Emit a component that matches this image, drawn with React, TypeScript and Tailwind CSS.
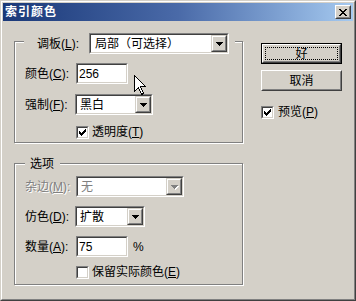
import React from "react";

const FONT = "font-['Liberation_Sans','Noto_Sans_CJK_SC',sans-serif]";

function Arrow({ disabled }: { disabled?: boolean }) {
  return (
    <svg width="8" height="5" viewBox="0 0 8 5" shapeRendering="crispEdges">
      {disabled && (
        <path d="M1 1h7v1h-7z M2 2h5v1h-5z M3 3h3v1h-3z M4 4h1v1h-1z" fill="#ffffff" />
      )}
      <path
        d="M0 0h7v1h-7z M1 1h5v1h-5z M2 2h3v1h-3z M3 3h1v1h-1z"
        fill={disabled ? "#808080" : "#000000"}
      />
    </svg>
  );
}

function Sunken({ className, children }: { className?: string; children?: React.ReactNode }) {
  return (
    <div
      className={`border border-t-[#808080] border-l-[#808080] border-b-white border-r-white ${className ?? ""}`}
    >
      <div className="h-full w-full border border-t-[#404040] border-l-[#404040] border-b-[#d4d0c8] border-r-[#d4d0c8] bg-white flex items-center">
        {children}
      </div>
    </div>
  );
}

function Combo({
  w,
  text,
  disabled,
  pl = "pl-[3px]",
}: {
  w: string;
  text: string;
  disabled?: boolean;
  pl?: string;
}) {
  return (
    <Sunken className={`${w} h-[21px]`}>
      <div
        className={`flex-1 ${pl} text-[12px] leading-[14px] ${disabled ? "text-[#808080]" : "text-black"} whitespace-nowrap`}
      >
        {text}
      </div>
      <div className="w-[16px] h-[17px] border border-t-[#d4d0c8] border-l-[#d4d0c8] border-b-[#404040] border-r-[#404040]">
        <div className="w-full h-full border border-t-white border-l-white border-b-[#808080] border-r-[#808080] bg-[#d4d0c8] flex items-center justify-center pl-px pt-px">
          <Arrow disabled={disabled} />
        </div>
      </div>
    </Sunken>
  );
}

function Input({ value }: { value: string }) {
  return (
    <Sunken className="w-[52px] h-[21px]">
      <div className="pl-[1px] text-[12px] leading-[14px] text-black">{value}</div>
    </Sunken>
  );
}

function CheckBox({ checked }: { checked?: boolean }) {
  return (
    <Sunken className="w-[13px] h-[13px] shrink-0">
      <div className="w-full h-full flex items-center justify-center">
        {checked && (
          <svg width="7" height="7" viewBox="0 0 7 7" shapeRendering="crispEdges">
            <path
              d="M6 0h1v1h-1z M5 1h2v1h-2z M0 2h1v1h-1z M4 2h3v1h-3z M0 3h2v1h-2z M3 3h3v1h-3z M0 4h5v1h-5z M1 5h3v1h-3z M2 6h1v1h-1z"
              fill="#000"
            />
          </svg>
        )}
      </div>
    </Sunken>
  );
}

function Label({ w, children, disabled }: { w: string; children: React.ReactNode; disabled?: boolean }) {
  return (
    <div
      className={`${w} shrink-0 text-[12px] leading-[14px] whitespace-nowrap ${
        disabled ? "text-[#808080] [text-shadow:1px_1px_0_#ffffff]" : "text-black"
      }`}
    >
      {children}
    </div>
  );
}

const groupCls =
  "border border-[#808080] shadow-[inset_1px_1px_0_#ffffff,1px_1px_0_#ffffff] flex flex-col";

export default function App() {
  return (
    <div className={`relative w-[356px] h-[301px] ${FONT} select-none`}>
      <div className="w-full h-full border border-t-[#d4d0c8] border-l-[#d4d0c8] border-b-[#404040] border-r-[#404040]">
        <div className="w-full h-full border border-t-white border-l-white border-b-[#808080] border-r-[#808080] bg-[#d4d0c8] p-px flex flex-col">
          {/* Title bar */}
          <div className="h-[18px] shrink-0 bg-gradient-to-r from-[#1a3878] via-[#4a6aa8] to-[#a6caf0] flex items-center justify-between pl-[2px] pr-[2px]">
            <div className="text-white font-bold text-[12px] leading-[14px] tracking-[1px]">索引颜色</div>
            <div className="w-[16px] h-[14px] border border-t-white border-l-white border-b-[#404040] border-r-[#404040]">
              <div className="w-full h-full border border-t-[#d4d0c8] border-l-[#d4d0c8] border-b-[#808080] border-r-[#808080] bg-[#d4d0c8] flex items-center justify-center pt-px">
                <svg width="8" height="7" viewBox="0 0 8 7" shapeRendering="crispEdges">
                  <path
                    d="M0 0h2v1h-2z M6 0h2v1h-2z M1 1h2v1h-2z M5 1h2v1h-2z M2 2h4v1h-4z M3 3h2v1h-2z M2 4h4v1h-4z M1 5h2v1h-2z M5 5h2v1h-2z M0 6h2v1h-2z M6 6h2v1h-2z"
                    fill="#000"
                  />
                </svg>
              </div>
            </div>
          </div>

          {/* Body */}
          <div className="flex flex-row pl-[11px]">
            {/* Left column */}
            <div className="flex flex-col w-[229px]">
              {/* Group 1 */}
              <div className={`${groupCls} mt-[20px] h-[102px]`}>
                <div className="-mt-[9px] ml-[9px] pl-[13px] pr-[6px] bg-[#d4d0c8] flex items-center w-fit h-[21px]">
                  <Label w="w-[52px]">
                    调板(<u>L</u>):
                  </Label>
                  <Combo w="w-[140px]" text="局部（可选择）" pl="pl-[4px]" />
                </div>
                <div className="mt-[9px] pl-[10px] flex items-center">
                  <Label w="w-[51px]">
                    颜色(<u>C</u>):
                  </Label>
                  <Input value="256" />
                </div>
                <div className="mt-[10px] pl-[10px] flex items-center">
                  <Label w="w-[50px]">
                    强制(<u>F</u>):
                  </Label>
                  <Combo w="w-[78px]" text="黑白" />
                </div>
                <div className="mt-[10px] pl-[61px] flex items-center gap-[3px]">
                  <CheckBox checked />
                  <div className="text-[12px] leading-[14px] text-black">
                    透明度(<u>T</u>)
                  </div>
                </div>
              </div>

              {/* Group 2 */}
              <div className={`${groupCls} mt-[20px] h-[122px]`}>
                <div className="-mt-[7px] ml-[10px] pl-[5px] w-[35px] bg-[#d4d0c8] text-[12px] leading-[14px] text-black">
                  选项
                </div>
                <div className="mt-[5px] pl-[10px] flex items-center">
                  <Label w="w-[51px]" disabled>
                    杂边(<u>M</u>):
                  </Label>
                  <Combo w="w-[108px]" text="无" disabled />
                </div>
                <div className="mt-[9px] pl-[10px] flex items-center">
                  <Label w="w-[50px]">
                    仿色(<u>D</u>):
                  </Label>
                  <Combo w="w-[70px]" text="扩散" />
                </div>
                <div className="mt-[9px] pl-[10px] flex items-center">
                  <Label w="w-[51px]">
                    数量(<u>A</u>):
                  </Label>
                  <Input value="75" />
                  <div className="ml-[5px] text-[12px] leading-[14px] text-black">%</div>
                </div>
                <div className="mt-[8px] pl-[61px] flex items-center gap-[3px]">
                  <CheckBox />
                  <div className="text-[12px] leading-[14px] text-black">
                    保留实际颜色(<u>E</u>)
                  </div>
                </div>
              </div>
            </div>

            {/* Right column */}
            <div className="flex flex-col ml-[18px]">
              <div className="mt-[22px] w-[81px] h-[21px] border border-black">
                <div className="w-full h-full border border-t-white border-l-white border-b-[#404040] border-r-[#404040]">
                  <div className="w-full h-full border border-t-[#d4d0c8] border-l-[#d4d0c8] border-b-[#808080] border-r-[#808080] bg-[#d4d0c8] p-px">
                    <div className="w-full h-full border border-dotted border-black flex items-center justify-center text-[12px] leading-[14px] text-black">
                      好
                    </div>
                  </div>
                </div>
              </div>
              <div className="mt-[6px] w-[81px] h-[21px] border border-t-white border-l-white border-b-[#404040] border-r-[#404040]">
                <div className="w-full h-full border border-t-[#d4d0c8] border-l-[#d4d0c8] border-b-[#808080] border-r-[#808080] bg-[#d4d0c8] flex items-center justify-center text-[12px] leading-[14px] text-black">
                  取消
                </div>
              </div>
              <div className="mt-[14px] flex items-center gap-[4px]">
                <CheckBox checked />
                <div className="text-[12px] leading-[14px] text-black">
                  预览(<u>P</u>)
                </div>
              </div>
            </div>
          </div>
        </div>
      </div>

      {/* Mouse cursor */}
      <svg
        className="absolute left-[134px] top-[75px]"
        width="13"
        height="21"
        viewBox="0 0 13 21"
        shapeRendering="crispEdges"
      >
        <path
          d="M0.5 0.5 L0.5 16.5 L4.5 12.5 L7.5 19.5 L9.5 18.5 L6.5 11.5 L11.5 11.5 Z"
          fill="#ffffff"
          stroke="#000000"
          strokeWidth="1"
          strokeLinejoin="miter"
        />
      </svg>
    </div>
  );
}
